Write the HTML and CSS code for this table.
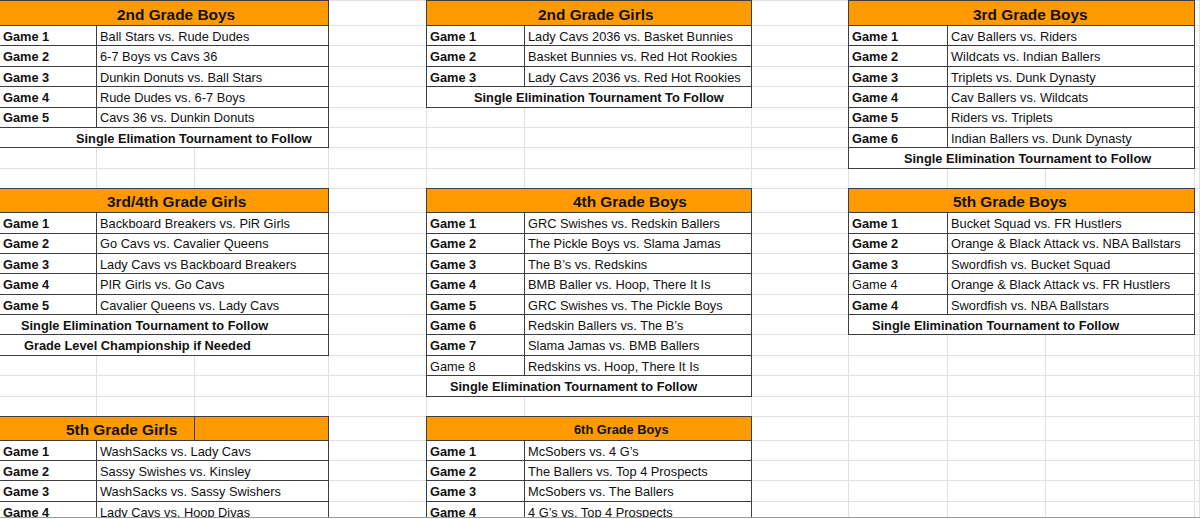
FILE: index.html
```html
<!DOCTYPE html>
<html lang="en">
<head>
<meta charset="utf-8">
<title>Game Schedule</title>
<link rel="stylesheet" href="styles.css">
</head>
<body>
<div class="page">
  <div class="sheet">
    <div class="cols">
      <div></div><div></div><div></div><div></div><div></div><div></div>
      <div></div><div></div><div></div><div></div><div></div>
    </div>
    <div class="rows">
      <div></div><div></div><div></div><div></div><div></div>
      <div></div><div></div><div></div><div></div><div></div>
      <div></div><div></div><div></div><div></div><div></div>
      <div></div><div></div><div></div><div></div><div></div>
      <div></div><div></div><div></div><div></div><div></div>
    </div>
    <div class="tables">

      <div class="tbl colL t1">
        <div class="c full hdr h1">2nd Grade Boys</div>
        <div class="c game">Game 1</div><div class="c team">Ball Stars vs. Rude Dudes</div>
        <div class="c game">Game 2</div><div class="c team">6-7 Boys vs Cavs 36</div>
        <div class="c game">Game 3</div><div class="c team">Dunkin Donuts vs. Ball Stars</div>
        <div class="c game">Game 4</div><div class="c team">Rude Dudes vs. 6-7 Boys</div>
        <div class="c game">Game 5</div><div class="c team">Cavs 36 vs. Dunkin Donuts</div>
        <div class="c full foot">Single Elimation Tournament to Follow</div>
      </div>

      <div class="tbl colM t2">
        <div class="c full hdr h1">2nd Grade Girls</div>
        <div class="c game">Game 1</div><div class="c team">Lady Cavs 2036 vs. Basket Bunnies</div>
        <div class="c game">Game 2</div><div class="c team">Basket Bunnies vs. Red Hot Rookies</div>
        <div class="c game">Game 3</div><div class="c team">Lady Cavs 2036 vs. Red Hot Rookies</div>
        <div class="c full foot">Single Elimination Tournament To Follow</div>
      </div>

      <div class="tbl colR t3">
        <div class="c full hdr h1">3rd Grade Boys</div>
        <div class="c game">Game 1</div><div class="c team">Cav Ballers vs. Riders</div>
        <div class="c game">Game 2</div><div class="c team">Wildcats vs. Indian Ballers</div>
        <div class="c game">Game 3</div><div class="c team">Triplets vs. Dunk Dynasty</div>
        <div class="c game">Game 4</div><div class="c team">Cav Ballers vs. Wildcats</div>
        <div class="c game">Game 5</div><div class="c team">Riders vs. Triplets</div>
        <div class="c game">Game 6</div><div class="c team">Indian Ballers vs. Dunk Dynasty</div>
        <div class="c full foot">Single Elimination Tournament to Follow</div>
      </div>

      <div class="tbl colL t4">
        <div class="c full hdr h2">3rd/4th Grade Girls</div>
        <div class="c game">Game 1</div><div class="c team">Backboard Breakers vs. PiR Girls</div>
        <div class="c game">Game 2</div><div class="c team">Go Cavs vs. Cavalier Queens</div>
        <div class="c game">Game 3</div><div class="c team">Lady Cavs vs Backboard Breakers</div>
        <div class="c game">Game 4</div><div class="c team">PIR Girls vs. Go Cavs</div>
        <div class="c game">Game 5</div><div class="c team">Cavalier Queens vs. Lady Cavs</div>
        <div class="c full foot">Single Elimination Tournament to Follow</div>
        <div class="c full foot foot2">Grade Level Championship if Needed</div>
      </div>

      <div class="tbl colM t5">
        <div class="c full hdr h2">4th Grade Boys</div>
        <div class="c game">Game 1</div><div class="c team">GRC Swishes vs. Redskin Ballers</div>
        <div class="c game">Game 2</div><div class="c team">The Pickle Boys vs. Slama Jamas</div>
        <div class="c game">Game 3</div><div class="c team">The B’s vs. Redskins</div>
        <div class="c game">Game 4</div><div class="c team">BMB Baller vs. Hoop, There It Is</div>
        <div class="c game">Game 5</div><div class="c team">GRC Swishes vs. The Pickle Boys</div>
        <div class="c game">Game 6</div><div class="c team">Redskin Ballers vs. The B’s</div>
        <div class="c game">Game 7</div><div class="c team">Slama Jamas vs. BMB Ballers</div>
        <div class="c game plain">Game 8</div><div class="c team">Redskins vs. Hoop, There It Is</div>
        <div class="c full foot">Single Elimination Tournament to Follow</div>
      </div>

      <div class="tbl colR t6">
        <div class="c full hdr h2">5th Grade Boys</div>
        <div class="c game">Game 1</div><div class="c team">Bucket Squad vs. FR Hustlers</div>
        <div class="c game">Game 2</div><div class="c team">Orange &amp; Black Attack vs. NBA Ballstars</div>
        <div class="c game">Game 3</div><div class="c team">Swordfish vs. Bucket Squad</div>
        <div class="c game plain">Game 4</div><div class="c team">Orange &amp; Black Attack vs. FR Hustlers</div>
        <div class="c game">Game 4</div><div class="c team">Swordfish vs. NBA Ballstars</div>
        <div class="c full foot">Single Elimination Tournament to Follow</div>
      </div>

      <div class="tbl colL3 t7">
        <div class="c span2 hdr h3">5th Grade Girls</div>
        <div class="c hdr h3"></div>
        <div class="c game">Game 1</div><div class="c team">WashSacks vs. Lady Cavs</div>
        <div class="c game">Game 2</div><div class="c team">Sassy Swishes vs. Kinsley</div>
        <div class="c game">Game 3</div><div class="c team">WashSacks vs. Sassy Swishers</div>
        <div class="c game">Game 4</div><div class="c team">Lady Cavs vs. Hoop Divas</div>
      </div>

      <div class="tbl colM t8">
        <div class="c full hdr h3 small">6th Grade Boys</div>
        <div class="c game">Game 1</div><div class="c team">McSobers vs. 4 G’s</div>
        <div class="c game">Game 2</div><div class="c team">The Ballers vs. Top 4 Prospects</div>
        <div class="c game">Game 3</div><div class="c team">McSobers vs. The Ballers</div>
        <div class="c game">Game 4</div><div class="c team">4 G’s vs. Top 4 Prospects</div>
      </div>

    </div>
  </div>
</div>
</body>
</html>
```

FILE: styles.css
```css
* { box-sizing: border-box; }

html, body {
  margin: 0;
  padding: 0;
  background: #ffffff;
  overflow: hidden;
}

body {
  width: 1200px;
  height: 519px;
  font-family: "Liberation Sans", Arial, sans-serif;
  color: #111111;
}

.page {
  height: 518px;
  padding-top: 1px;
  overflow: hidden;
  border-bottom: 1px solid #9c9c9c;
}

.sheet {
  --colw: 97px 98px 134px 98px 98px 227px 97px 99px 98px 149px 1fr;
  --rowh: 25px repeat(8, 20.4px) 24px repeat(10, 20.4px) 23.6px repeat(4, 20.4px);
  display: grid;
  width: 1200px;
}

.sheet > * {
  grid-area: 1 / 1;
}

/* background gridlines */
.cols {
  display: grid;
  grid-template-columns: var(--colw);
}
.cols > div {
  border-right: 1px solid #e1e1e1;
}

.rows {
  display: grid;
  grid-template-rows: var(--rowh);
  margin-top: -1px;
  border-top: 1px solid #e1e1e1;
}
.rows > div {
  border-bottom: 1px solid #e1e1e1;
}

/* tables layer */
.tables {
  display: grid;
  grid-template-columns: var(--colw);
  grid-template-rows: var(--rowh);
}

.tbl {
  display: grid;
  align-self: start;
  align-content: start;
  margin: -1px 0 0 -1px;
  border-top: 1px solid #3e3e3e;
  border-left: 1px solid #3e3e3e;
  background: #ffffff;
}

.colL  { grid-template-columns: 97px 1fr; }
.colM  { grid-template-columns: 98px 1fr; }
.colR  { grid-template-columns: 99px 1fr; }
.colL3 { grid-template-columns: 97px 98px 1fr; }

.t1 { grid-column: 1 / 4;  grid-row: 1 / 8; }
.t2 { grid-column: 5 / 7;  grid-row: 1 / 6; }
.t3 { grid-column: 8 / 11; grid-row: 1 / 9; }
.t4 { grid-column: 1 / 4;  grid-row: 10 / 18; }
.t5 { grid-column: 5 / 7;  grid-row: 10 / 20; }
.t6 { grid-column: 8 / 11; grid-row: 10 / 17; }
.t7 { grid-column: 1 / 4;  grid-row: 21 / 26; }
.t8 { grid-column: 5 / 7;  grid-row: 21 / 26; }

.c {
  display: flex;
  align-items: flex-end;
  height: 20.4px;
  padding: 0 3px 1.5px;
  border-right: 1px solid #3e3e3e;
  border-bottom: 1px solid #3e3e3e;
  font-size: 12.8px;
  line-height: 14px;
  white-space: nowrap;
  overflow: hidden;
}

.game { font-weight: bold; }
.game.plain { font-weight: normal; }
.team { grid-column: 2 / -1; }

.full  { grid-column: 1 / -1; }
.span2 { grid-column: 1 / 3; }

.hdr {
  background: #ff9a00;
  font-size: 15.4px;
  font-weight: bold;
  line-height: 17px;
  padding-bottom: 2px;
}
.hdr.small {
  font-size: 12.8px;
  line-height: 14px;
  padding-bottom: 3px;
}
.h1 { height: 25px; }
.h2 { height: 24px; }
.h3 { height: 23.6px; }

.foot { font-weight: bold; }

/* text offsets inside merged cells */
.t1 .hdr  { padding-left: 117px; }
.t1 .foot { padding-left: 76px; }
.t2 .hdr  { padding-left: 111px; }
.t2 .foot { padding-left: 47px; }
.t3 .hdr  { padding-left: 124px; }
.t3 .foot { padding-left: 55px; }
.t4 .hdr  { padding-left: 107px; }
.t4 .foot { padding-left: 21px; }
.t4 .foot2 { padding-left: 24px; }
.t5 .hdr  { padding-left: 146px; }
.t5 .foot { padding-left: 23px; }
.t6 .hdr  { padding-left: 104px; }
.t6 .foot { padding-left: 23px; }
.t7 .span2 { padding-left: 66px; }
.t8 .hdr  { padding-left: 147px; }
```
